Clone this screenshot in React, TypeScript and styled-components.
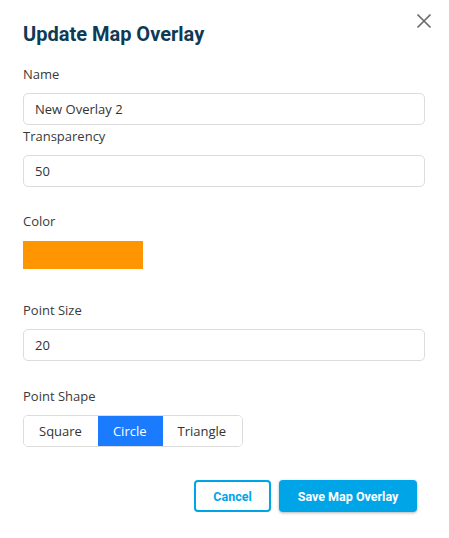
import styled, { createGlobalStyle } from 'styled-components'
import { useState } from 'react'

const GlobalStyle = createGlobalStyle`
  html, body {
    margin: 0;
    padding: 0;
    background: #ffffff;
  }
  * {
    box-sizing: border-box;
  }
`

const shapes = ['Square', 'Circle', 'Triangle']

export default function App() {
  const [name, setName] = useState('New Overlay 2')
  const [transparency, setTransparency] = useState('50')
  const [pointSize, setPointSize] = useState('20')
  const [shape, setShape] = useState('Circle')

  return (
    <>
      <GlobalStyle />
      <Modal>
        <CloseButton aria-label="Close">
          <svg width="16" height="16" viewBox="0 0 16 16">
            <path d="M1.5 1.5 L14.5 14.5 M14.5 1.5 L1.5 14.5" stroke="#6b6b6b" strokeWidth="1.7" />
          </svg>
        </CloseButton>
        <Title>Update Map Overlay</Title>

        <Field $gap={1}>
          <Label htmlFor="name">Name</Label>
          <Input id="name" value={name} onChange={e => setName(e.target.value)} />
        </Field>

        <Field $gap={24}>
          <Label htmlFor="transparency">Transparency</Label>
          <Input id="transparency" value={transparency} onChange={e => setTransparency(e.target.value)} />
        </Field>

        <Field $gap={31}>
          <Label>Color</Label>
          <Swatch $color="#ff9500" />
        </Field>

        <Field $gap={25}>
          <Label htmlFor="pointSize">Point Size</Label>
          <Input id="pointSize" value={pointSize} onChange={e => setPointSize(e.target.value)} />
        </Field>

        <Field $gap={33}>
          <Label>Point Shape</Label>
          <ButtonGroup>
            {shapes.map(s => (
              <ShapeButton key={s} $active={s === shape} onClick={() => setShape(s)}>
                {s}
              </ShapeButton>
            ))}
          </ButtonGroup>
        </Field>

        <Footer>
          <CancelButton>Cancel</CancelButton>
          <SaveButton>Save Map Overlay</SaveButton>
        </Footer>
      </Modal>
    </>
  )
}

const Modal = styled.div`
  position: relative;
  width: 449px;
  height: 538px;
  padding: 22px 24px 0 23px;
  background: #ffffff;
  font-family: 'Open Sans', 'Noto Sans', sans-serif;
`

const CloseButton = styled.button`
  position: absolute;
  top: 13px;
  right: 17px;
  width: 16px;
  height: 16px;
  padding: 0;
  border: none;
  background: none;
  cursor: pointer;
  svg {
    display: block;
  }
`

const Title = styled.h2`
  margin: 0 0 18px;
  font-family: Roboto, 'Liberation Sans', sans-serif;
  font-weight: 700;
  font-size: 20px;
  line-height: 24px;
  color: #0e3a56;
`

const Field = styled.div<{ $gap: number }>`
  display: flex;
  flex-direction: column;
  align-items: flex-start;
  margin-bottom: ${p => p.$gap}px;
`

const Label = styled.label`
  font-size: 13px;
  line-height: 20px;
  color: #3a3a3a;
  margin-bottom: 9px;
`

const Input = styled.input`
  width: 100%;
  height: 32px;
  padding: 0 11px;
  border: 1px solid #dcdcdc;
  border-radius: 5px;
  font-family: 'Open Sans', 'Noto Sans', sans-serif;
  font-size: 13px;
  color: #333333;
  background: #ffffff;

  &:focus {
    outline: none;
  }
`

const Swatch = styled.div<{ $color: string }>`
  width: 120px;
  height: 28px;
  margin-top: 1px;
  background: ${p => p.$color};
`

const ButtonGroup = styled.div`
  display: flex;
  height: 32px;
  border: 1px solid #dcdcdc;
  border-radius: 5px;
  overflow: hidden;
`

const ShapeButton = styled.button<{ $active: boolean }>`
  padding: 0 16px 0 15px;
  border: none;
  font-family: 'Open Sans', 'Noto Sans', sans-serif;
  font-size: 13px;
  color: ${p => (p.$active ? '#ffffff' : '#333333')};
  background: ${p => (p.$active ? '#1a7bff' : '#ffffff')};
  cursor: pointer;
`

const Footer = styled.div`
  display: flex;
  justify-content: flex-end;
  gap: 8px;
  padding-right: 8px;
`

const BaseButton = styled.button`
  height: 32px;
  border-radius: 4px;
  font-family: Roboto, 'Liberation Sans', sans-serif;
  font-weight: 700;
  font-size: 12.5px;
  cursor: pointer;
`

const CancelButton = styled(BaseButton)`
  width: 77px;
  border: 2px solid #00a5e8;
  color: #00a5e8;
  background: #ffffff;
`

const SaveButton = styled(BaseButton)`
  width: 138px;
  border: none;
  color: #ffffff;
  background: #00a5e8;
  box-shadow: 0 1px 3px rgba(0, 0, 0, 0.3);
`
